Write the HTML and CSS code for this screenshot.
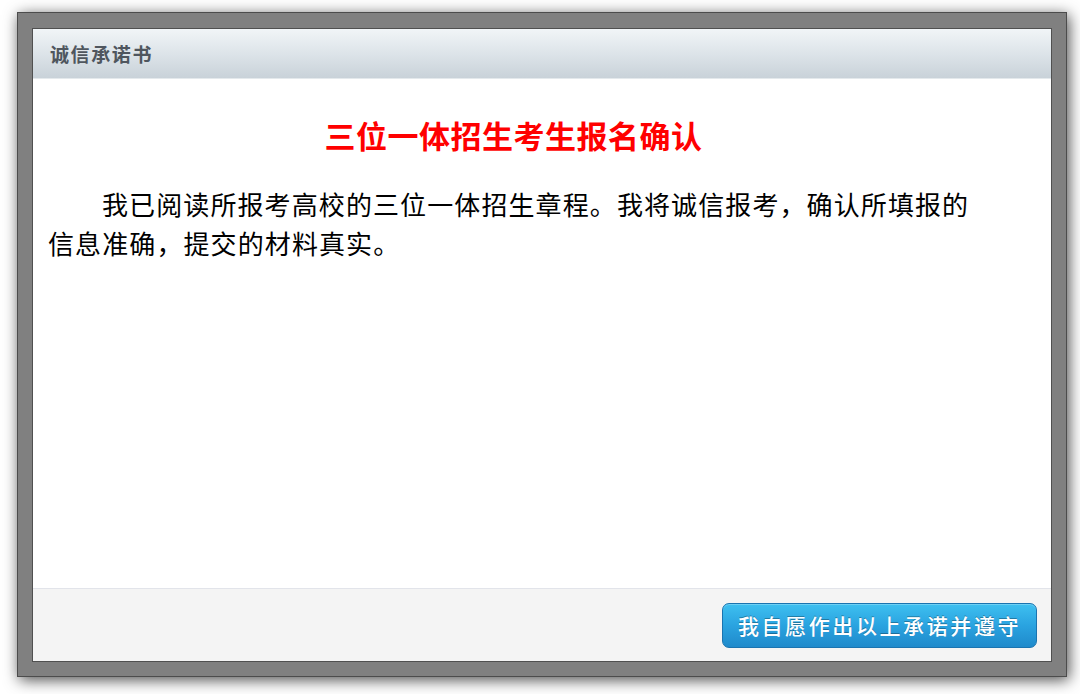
FILE: index.html
```html
<!DOCTYPE html>
<html lang="zh-CN">
<head>
<meta charset="utf-8">
<title>诚信承诺书</title>
<link rel="stylesheet" href="styles.css">
</head>
<body>
<div class="page">
  <div class="frame">
    <div class="dialog">
      <div class="dialog-header">诚信承诺书</div>
      <div class="dialog-body">
        <h1 class="title">三位一体招生考生报名确认</h1>
        <p class="text">我已阅读所报考高校的三位一体招生章程。我将诚信报考，确认所填报的信息准确，提交的材料真实。</p>
      </div>
      <div class="dialog-footer">
        <button class="btn-confirm" type="button">我自愿作出以上承诺并遵守</button>
      </div>
    </div>
  </div>
</div>
</body>
</html>
```

FILE: styles.css
```css
html, body {
  margin: 0;
  padding: 0;
  background: #ffffff;
}

body {
  font-family: "Noto Sans CJK SC", "Noto Sans", sans-serif;
}

.page {
  width: 1080px;
  height: 694px;
  box-sizing: border-box;
  padding: 12px 13px 17px 17px;
}

.frame {
  width: 1050px;
  height: 665px;
  box-sizing: border-box;
  background: #808080;
  border: 1px solid #4c4c4c;
  padding: 15px 14px 14px 14px;
  box-shadow: 2px 3px 14px rgba(0, 0, 0, 0.7);
}

.dialog {
  height: 100%;
  box-sizing: border-box;
  border: 1px solid #505050;
  background: #ffffff;
  display: flex;
  flex-direction: column;
}

.dialog-header {
  height: 50px;
  box-sizing: border-box;
  padding-left: 17px;
  display: flex;
  align-items: center;
  background: linear-gradient(to bottom, #f1f5f7 0%, #dde4e9 50%, #c9d2d9 100%);
  border-bottom: 1px solid #e4e9ec;
  color: #4f565e;
  font-size: 19px;
  font-weight: bold;
  letter-spacing: 1.6px;
}

.dialog-body {
  flex: 1;
  padding: 37px 72px 0 15px;
}

.title {
  margin: 0;
  text-align: center;
  color: #ff0000;
  font-size: 31px;
  font-weight: bold;
  line-height: 38px;
  letter-spacing: 0.5px;
}

.text {
  margin: 30px 0 0 0;
  color: #000000;
  font-size: 26px;
  letter-spacing: 1.1px;
  line-height: 39px;
  text-indent: 54px;
}

.dialog-footer {
  height: 73px;
  box-sizing: border-box;
  border-top: 1px solid #e2e4ea;
  background: #f4f4f4;
  display: flex;
  justify-content: flex-end;
  align-items: center;
  padding-right: 14px;
}

.btn-confirm {
  width: 315px;
  height: 45px;
  box-sizing: border-box;
  border: 1px solid #1a74b0;
  border-radius: 7px;
  background: linear-gradient(to bottom, #3ec0f0 0%, #2aa3e0 50%, #1f8acb 100%);
  color: #ffffff;
  font-family: "Noto Sans CJK SC", "Noto Sans", sans-serif;
  font-size: 21px;
  font-weight: 500;
  letter-spacing: 2.6px;
  text-shadow: 0 -1px 0 rgba(0, 0, 0, 0.3);
  box-shadow: inset 0 1px 0 rgba(255, 255, 255, 0.25);
  padding: 0;
  cursor: pointer;
}
```
